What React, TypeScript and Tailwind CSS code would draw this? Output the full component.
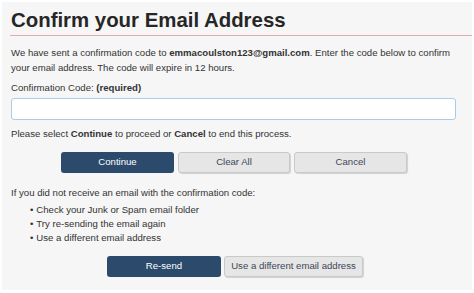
import React from "react";

const font = { fontFamily: '"Liberation Sans", Arial, sans-serif' };

export default function App() {
  return (
    <div className="w-[474px] h-[293px] bg-white p-[2px] pr-[2px] pb-[3px]" style={font}>
      <div className="h-full bg-[#f6f6f6] pl-[9px] pt-[6px] text-[#333333]">
        <h1 className="text-[20.4px] leading-[24px] font-bold text-[#262626]">Confirm your Email Address</h1>
        <div className="mt-[3px] h-px bg-[#dcaeb2] ml-[-1px]" />
        <p className="mt-[9px] text-[9.6px] leading-[15px] pr-[12px]">
          We have sent a confirmation code to <b>emmacoulston123@gmail.com</b>. Enter the code below to confirm
          your email address. The code will expire in 12 hours.
        </p>
        <p className="mt-[5px] text-[9.6px] leading-[15px]">
          Confirmation Code: <b>(required)</b>
        </p>
        <input
          className="mt-[3px] block w-[445px] h-[22px] bg-white border border-[#a9cde6] rounded-[3px] outline-none"
          aria-label="Confirmation Code"
        />
        <p className="mt-[6px] text-[9.6px] leading-[15px]">
          Please select <b>Continue</b> to proceed or <b>Cancel</b> to end this process.
        </p>
        <div className="mt-[11px] flex gap-[4px] pl-[50px]">
          <button className="w-[113px] h-[21px] rounded-[3px] bg-[#2b4a6c] text-white text-[9.6px]">Continue</button>
          <button className="w-[112px] h-[21px] rounded-[3px] bg-[#e6e6e6] border border-[#c9c9c9] shadow-[1px_1px_1px_rgba(0,0,0,0.15)] text-[#3d4756] text-[9.6px]">Clear All</button>
          <button className="w-[113px] h-[21px] rounded-[3px] bg-[#e6e6e6] border border-[#c9c9c9] shadow-[1px_1px_1px_rgba(0,0,0,0.15)] text-[#3d4756] text-[9.6px]">Cancel</button>
        </div>
        <p className="mt-[12px] text-[9.6px] leading-[15px]">
          If you did not receive an email with the confirmation code:
        </p>
        <ul className="mt-[3px] text-[9.6px] leading-[14px] pl-[19px]">
          <li className="flex gap-[3px]"><span>•</span><span>Check your Junk or Spam email folder</span></li>
          <li className="flex gap-[3px]"><span>•</span><span>Try re-sending the email again</span></li>
          <li className="flex gap-[3px]"><span>•</span><span>Use a different email address</span></li>
        </ul>
        <div className="mt-[11px] flex gap-[3px] pl-[96px]">
          <button className="w-[114px] h-[21px] rounded-[3px] bg-[#2b4a6c] text-white text-[9.6px]">Re-send</button>
          <button className="w-[139px] h-[21px] rounded-[3px] bg-[#e6e6e6] border border-[#c9c9c9] shadow-[1px_1px_1px_rgba(0,0,0,0.15)] text-[#3d4756] text-[9.6px]">Use a different email address</button>
        </div>
      </div>
    </div>
  );
}
